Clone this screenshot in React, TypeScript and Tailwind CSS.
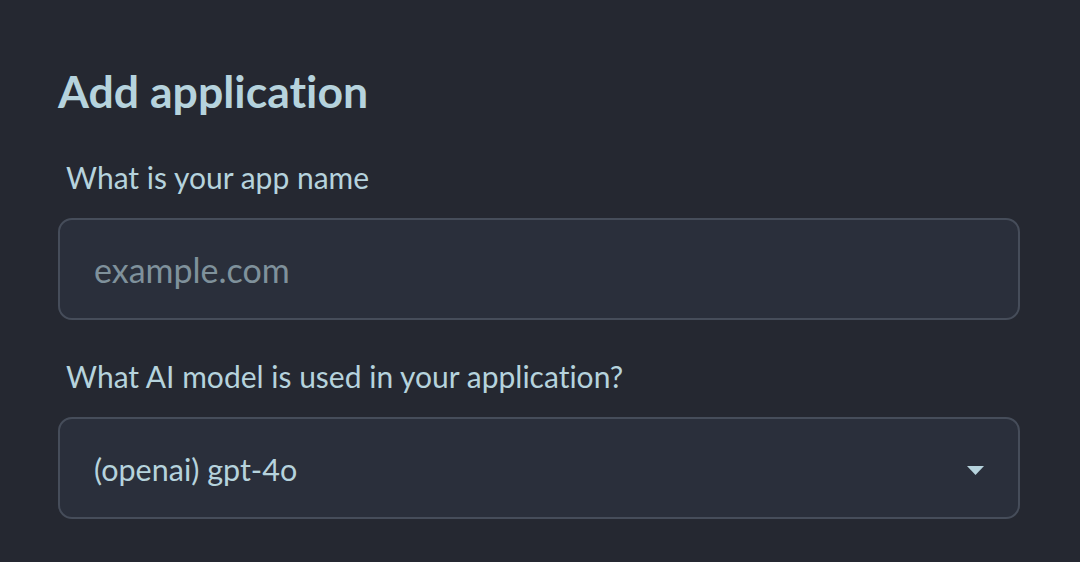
export default function App() {
  return (
    <div className="min-h-screen bg-[#252831] font-['Lato','Noto_Sans',sans-serif] text-[#b6d3dd] [font-variant-ligatures:none]">
      <div className="pl-[58px] pt-[61px] pr-[60px]">
        {/* Title */}
        <h1 className="text-[44.6px] font-bold leading-[60px]">Add application</h1>

        {/* App name */}
        <label className="mt-[36px] block pl-[8px] text-[30px] leading-[40px]">
          What is your app name
        </label>
        <div className="mt-[21px] flex h-[102px] items-center rounded-[14px] border-2 border-[#464d5a] bg-[#2a2f3b] px-[34px]">
          <input
            className="w-full bg-transparent text-[34px] text-[#b6d3dd] outline-none placeholder:text-[#7f919b]"
            placeholder="example.com"
          />
        </div>

        {/* Model */}
        <label className="mt-[36px] block pl-[8px] text-[30px] leading-[40px]">
          What AI model is used in your application?
        </label>
        <div className="mt-[21px] flex h-[102px] items-center justify-between rounded-[14px] border-2 border-[#464d5a] bg-[#2a2f3b] pl-[34px] pr-[34px]">
          <span className="mt-[3px] text-[30.5px]">(openai) gpt-4o</span>
          <svg width="17" height="9" viewBox="0 0 17 9" className="mt-[4px]">
            <path d="M0 0 L17 0 L8.5 9 Z" fill="#b6d3dd" />
          </svg>
        </div>
      </div>
    </div>
  );
}
